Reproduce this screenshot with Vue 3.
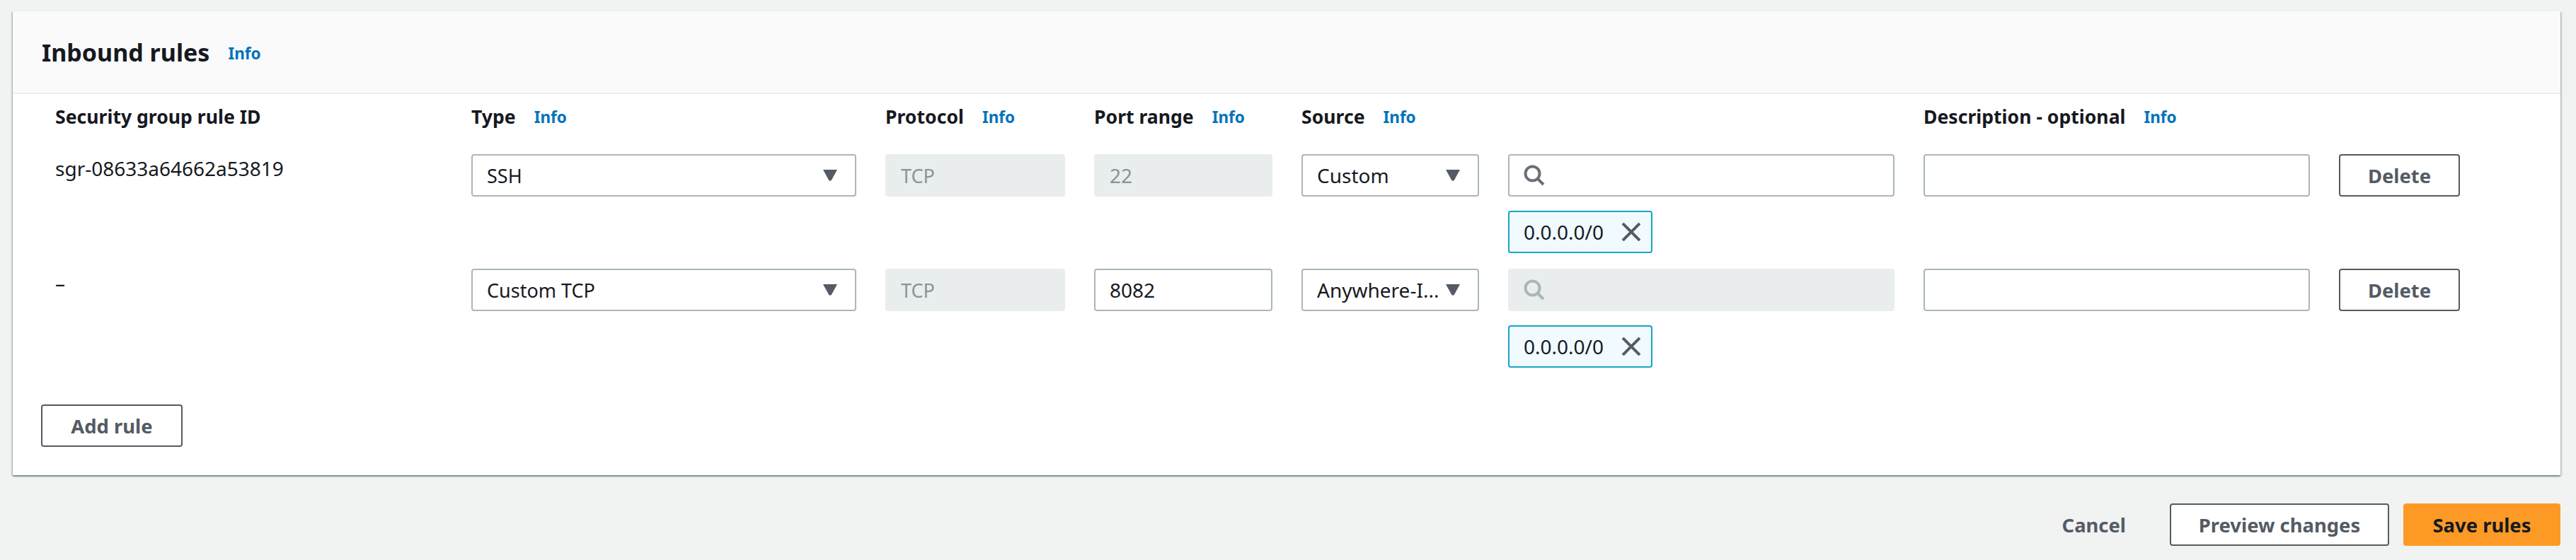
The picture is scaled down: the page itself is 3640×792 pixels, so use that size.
<script setup>
const rows = [
  { id: 'sgr-08633a64662a53819', type: 'SSH', port: '22', portDisabled: true, source: 'Custom', searchDisabled: false },
  { id: '–', type: 'Custom TCP', port: '8082', portDisabled: false, source: 'Anywhere-I...', searchDisabled: true },
]
const heads = [
  { label: 'Security group rule ID' },
  { label: 'Type', info: true },
  { label: 'Protocol', info: true },
  { label: 'Port range', info: true },
  { label: 'Source', info: true },
  { label: '' },
  { label: 'Description - optional', info: true },
  { label: '' },
]
</script>

<template>
  <div class="page">
    <section class="card">
      <header class="card-head">
        <h2>Inbound rules</h2>
        <a class="info">Info</a>
      </header>
      <div class="card-body">
        <div class="grid head-row">
          <div v-for="(h, i) in heads" :key="i" class="th">
            <span>{{ h.label }}</span>
            <a v-if="h.info" class="info">Info</a>
          </div>
        </div>
        <div v-for="r in rows" :key="r.id" class="grid rule">
          <div class="rule-id">{{ r.id }}</div>
          <div class="field select">
            <span>{{ r.type }}</span>
            <svg class="caret" viewBox="0 0 20 16"><path d="M0 0h20L11.5 15.5h-3z" /></svg>
          </div>
          <div class="field disabled"><span>TCP</span></div>
          <div class="field num" :class="{ disabled: r.portDisabled }"><span>{{ r.port }}</span></div>
          <div class="field select source">
            <span>{{ r.source }}</span>
            <svg class="caret" viewBox="0 0 20 16"><path d="M0 0h20L11.5 15.5h-3z" /></svg>
          </div>
          <div class="cidr">
            <div class="field search" :class="{ disabled: r.searchDisabled }">
              <svg class="glass" viewBox="0 0 30 30"><circle cx="12.5" cy="12.5" r="10" /><path d="M19.5 19.5 L28 28" /></svg>
            </div>
            <div class="chip">
              <span>0.0.0.0/0</span>
              <svg class="close" viewBox="0 0 26 26"><path d="M1 1 25 25M25 1 1 25" /></svg>
            </div>
          </div>
          <div class="field"></div>
          <button class="btn">Delete</button>
        </div>
        <button class="btn add">Add rule</button>
      </div>
    </section>
    <footer class="actions">
      <a class="cancel">Cancel</a>
      <button class="btn preview">Preview changes</button>
      <button class="btn save">Save rules</button>
    </footer>
  </div>
</template>

<style>
html, body { margin: 0; background: #f1f3f3; }
</style>

<style scoped>
.page {
  width: 3640px;
  height: 792px;
  box-sizing: border-box;
  padding: 16px 22px 0 18px;
  background: #f1f3f3;
  font-family: "Noto Sans", "Open Sans", sans-serif;
  font-size: 27px;
  color: #16191f;
  overflow: hidden;
}
.card {
  height: 656px;
  background: #fff;
  box-shadow: 0 2px 2px 0 rgba(0, 28, 36, 0.4), 2px 1px 2px 0 rgba(0, 28, 36, 0.15), -2px 1px 2px 0 rgba(0, 28, 36, 0.15);
}
.card-head {
  height: 115px;
  display: flex;
  align-items: center;
  gap: 26px;
  padding-left: 41px;
  background: #fafafa;
  border-bottom: 2px solid #eaeded;
}
h2 {
  margin: 0;
  font-size: 34px;
  font-weight: 700;
  line-height: 44px;
}
.card-head .info {
  margin-top: 4px;
}
.info {
  color: #0073bb;
  font-size: 22.5px;
  font-weight: 700;
}
.card-body {
  padding-left: 40px;
}
.grid {
  display: grid;
  grid-template-columns: 547px 544px 254px 252px 251px 546px 546px 171px;
  column-gap: 41px;
  padding-left: 20px;
}
.head-row {
  height: 85px;
  padding-top: 16px;
  box-sizing: border-box;
}
.th {
  display: flex;
  align-items: center;
  gap: 26px;
  height: 32px;
  font-size: 26.6px;
  font-weight: 700;
  white-space: nowrap;
}
.rule {
  margin-bottom: 22px;
}
.rule-id {
  font-size: 28px;
  line-height: 40px;
}
.field {
  height: 60px;
  box-sizing: border-box;
  border: 2px solid #aab7b8;
  border-radius: 4px;
  background: #fff;
  display: flex;
  align-items: center;
  padding: 0 20px;
  white-space: nowrap;
}
.field.num {
  font-size: 28px;
}
.field.disabled {
  background: #eaeded;
  border-color: #eaeded;
  color: #879596;
}
.select {
  justify-content: space-between;
  padding-right: 25px;
}
.source {
  font-size: 28px;
}
.caret {
  width: 20px;
  height: 16px;
  flex: none;
  fill: #545b64;
}
.cidr {
  display: flex;
  flex-direction: column;
  align-items: flex-start;
  gap: 20px;
}
.search {
  width: 100%;
}
.glass {
  width: 30px;
  height: 30px;
  fill: none;
  stroke: #687078;
  stroke-width: 4;
}
.search.disabled .glass {
  stroke: #aab7b8;
}
.chip {
  height: 60px;
  width: 204px;
  box-sizing: border-box;
  border: 2px solid #16a5c8;
  border-radius: 4px;
  background: #f1faff;
  display: flex;
  align-items: center;
  justify-content: space-between;
  padding: 0 15px 0 20px;
  font-size: 28px;
}
.close {
  width: 26px;
  height: 26px;
  fill: none;
  stroke: #545b64;
  stroke-width: 4;
}
.btn {
  height: 60px;
  box-sizing: border-box;
  border: 2px solid #545b64;
  border-radius: 4px;
  background: #fff;
  color: #545b64;
  font: 700 27.4px "Noto Sans", "Open Sans", sans-serif;
  padding: 0;
}
.add {
  display: block;
  width: 200px;
  margin-top: 52px;
}
.actions {
  display: flex;
  align-items: center;
  justify-content: flex-end;
  gap: 20px;
  margin-top: 40px;
}
.cancel {
  margin-right: 42px;
  font-size: 27.4px;
  font-weight: 700;
  color: #545b64;
}
.preview {
  width: 310px;
}
.save {
  width: 222px;
  background: #fd9a26;
  border-color: #fd9a26;
  color: #16191f;
}
</style>
